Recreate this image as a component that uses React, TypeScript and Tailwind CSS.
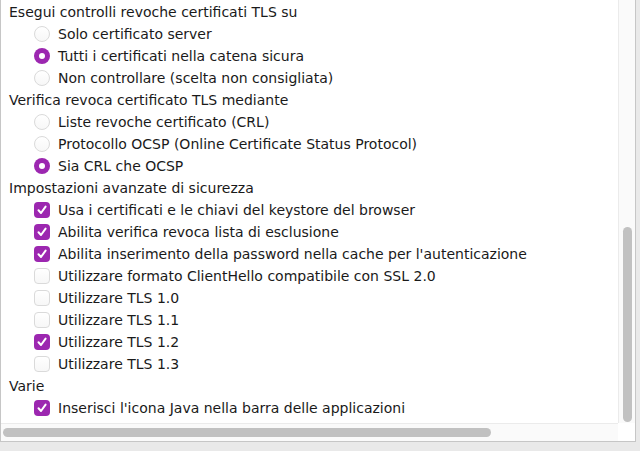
import React from "react";

type Item = { kind: "head"; label: string } | { kind: "radio" | "check"; label: string; on?: boolean };

const items: Item[] = [
  { kind: "head", label: "Esegui controlli revoche certificati TLS su" },
  { kind: "radio", label: "Solo certificato server" },
  { kind: "radio", label: "Tutti i certificati nella catena sicura", on: true },
  { kind: "radio", label: "Non controllare (scelta non consigliata)" },
  { kind: "head", label: "Verifica revoca certificato TLS mediante" },
  { kind: "radio", label: "Liste revoche certificato (CRL)" },
  { kind: "radio", label: "Protocollo OCSP (Online Certificate Status Protocol)" },
  { kind: "radio", label: "Sia CRL che OCSP", on: true },
  { kind: "head", label: "Impostazioni avanzate di sicurezza" },
  { kind: "check", label: "Usa i certificati e le chiavi del keystore del browser", on: true },
  { kind: "check", label: "Abilita verifica revoca lista di esclusione", on: true },
  { kind: "check", label: "Abilita inserimento della password nella cache per l'autenticazione", on: true },
  { kind: "check", label: "Utilizzare formato ClientHello compatibile con SSL 2.0" },
  { kind: "check", label: "Utilizzare TLS 1.0" },
  { kind: "check", label: "Utilizzare TLS 1.1" },
  { kind: "check", label: "Utilizzare TLS 1.2", on: true },
  { kind: "check", label: "Utilizzare TLS 1.3" },
  { kind: "head", label: "Varie" },
  { kind: "check", label: "Inserisci l'icona Java nella barra delle applicazioni", on: true },
];

function Radio({ on }: { on?: boolean }) {
  if (on) {
    return (
      <span className="flex h-4 w-4 shrink-0 items-center justify-center rounded-full bg-[#9c27b0]">
        <span className="h-[6px] w-[6px] rounded-full bg-white" />
      </span>
    );
  }
  return <span className="h-4 w-4 shrink-0 rounded-full border border-[#dadada] bg-gradient-to-b from-white to-[#f7f7f7]" />;
}

function Check({ on }: { on?: boolean }) {
  if (on) {
    return (
      <span className="flex h-4 w-4 shrink-0 items-center justify-center rounded-[4px] bg-[#9c27b0]">
        <svg width="12" height="12" viewBox="0 0 12 12" fill="none">
          <path d="M2.5 6.3 L5 9 L9.6 2.6" stroke="white" strokeWidth="2" strokeLinecap="round" strokeLinejoin="round" />
        </svg>
      </span>
    );
  }
  return <span className="h-4 w-4 shrink-0 rounded-[4px] border border-[#dadada] bg-gradient-to-b from-white to-[#f7f7f7]" />;
}

export default function App() {
  return (
    <div className="h-[451px] w-[640px] overflow-hidden bg-[#e9e9e9] text-[14px] text-[#1a1a1a] [font-family:'DejaVu_Sans',sans-serif]">
      <div className="flex h-[442px] w-[636px] border-b border-l border-r border-[#c6c6c6] bg-white">
        <div className="flex min-w-0 flex-1 flex-col">
          <div className="flex-1 overflow-hidden pt-[1px]">
            {items.map((it, i) =>
              it.kind === "head" ? (
                <div key={i} className="flex h-[22px] items-center pl-2 whitespace-nowrap">
                  {it.label}
                </div>
              ) : (
                <div key={i} className="flex h-[22px] items-center gap-2 pl-[33px] whitespace-nowrap">
                  {it.kind === "radio" ? <Radio on={it.on} /> : <Check on={it.on} />}
                  <span>{it.label}</span>
                </div>
              )
            )}
          </div>
          <div className="flex h-[18px] items-center border-t border-[#ebebeb] bg-[#fafafa] pl-[2px]">
            <div className="h-[9px] w-[488px] rounded-full bg-[#c1c1c1]" />
          </div>
        </div>
        <div className="flex w-[17px] flex-col">
          <div className="flex-1 border-l border-[#ebebeb] bg-[#fafafa] pl-[4px] pt-[227px]">
            <div className="h-[195px] w-[9px] rounded-full bg-[#c1c1c1]" />
          </div>
          <div className="h-[18px] bg-white" />
        </div>
      </div>
    </div>
  );
}
